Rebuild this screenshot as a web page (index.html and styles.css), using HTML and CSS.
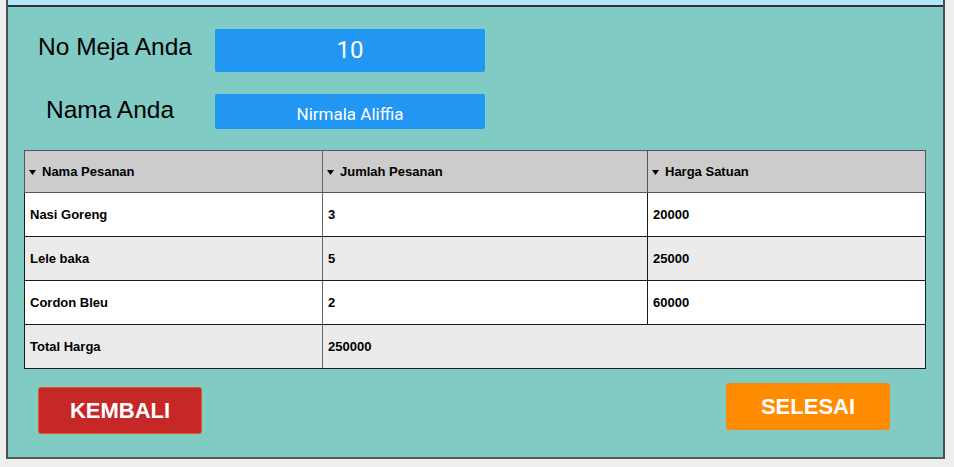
FILE: index.html
```html
<!DOCTYPE html>
<html lang="id">
<head>
<meta charset="utf-8">
<title>Pesanan</title>
<link rel="stylesheet" href="styles.css">
</head>
<body>
<div class="frame">
  <div class="frame-top"></div>
  <main class="panel">
    <div class="form-row form-row--meja">
      <label class="label label--meja">No Meja Anda</label>
      <div class="field field--meja">10</div>
    </div>
    <div class="form-row form-row--nama">
      <label class="label label--nama">Nama Anda</label>
      <div class="field field--nama">Nirmala Aliffia</div>
    </div>
    <table class="orders">
      <colgroup>
        <col class="col1"><col class="col2"><col class="col3">
      </colgroup>
      <thead>
        <tr>
          <th><svg class="caret" width="7" height="5" viewBox="0 0 7 5"><polygon points="0,0 7,0 3.5,5" fill="#000"/></svg>Nama Pesanan</th>
          <th><svg class="caret" width="7" height="5" viewBox="0 0 7 5"><polygon points="0,0 7,0 3.5,5" fill="#000"/></svg>Jumlah Pesanan</th>
          <th><svg class="caret" width="7" height="5" viewBox="0 0 7 5"><polygon points="0,0 7,0 3.5,5" fill="#000"/></svg>Harga Satuan</th>
        </tr>
      </thead>
      <tbody>
        <tr><td>Nasi Goreng</td><td>3</td><td>20000</td></tr>
        <tr class="alt"><td>Lele baka</td><td>5</td><td>25000</td></tr>
        <tr><td>Cordon Bleu</td><td>2</td><td>60000</td></tr>
        <tr class="alt"><td>Total Harga</td><td colspan="2">250000</td></tr>
      </tbody>
    </table>
    <div class="actions">
      <button class="btn btn--back">KEMBALI</button>
      <button class="btn btn--done">SELESAI</button>
    </div>
  </main>
</div>
</body>
</html>
```

FILE: styles.css
```css
html, body {
  margin: 0;
  padding: 0;
}
body {
  background: #eeeeee;
  font-family: "Liberation Sans", Arial, sans-serif;
  color: #000;
}
.frame {
  margin-left: 6px;
  width: 939px;
  box-sizing: border-box;
  border-left: 2px solid #4d4d4d;
  border-right: 2px solid #4d4d4d;
  border-bottom: 2px solid #555a58;
}
.frame-top {
  height: 5px;
  background: #b3e5fc;
  border-bottom: 2px solid #333;
}
.panel {
  background: #80cbc4;
  height: 450px;
  box-sizing: border-box;
  padding: 22px 0 0 0;
}
.form-row {
  display: flex;
  align-items: center;
}
.form-row--nama {
  margin-top: 22px;
}
.label {
  box-sizing: border-box;
  width: 207px;
  font-size: 24.5px;
  line-height: 28px;
}
.label--meja {
  padding-left: 30px;
  padding-bottom: 8px;
}
.label--nama {
  padding-left: 38px;
  padding-bottom: 3px;
}
.field {
  width: 270px;
  box-sizing: border-box;
  background: #2196f3;
  border-radius: 2px;
  color: #fff;
  font-family: Roboto, "Liberation Sans", sans-serif;
  text-align: center;
}
.field--meja {
  height: 43px;
  font-size: 24px;
  line-height: 43px;
}
.field--nama {
  height: 35px;
  font-size: 17px;
  line-height: 20px;
  padding-top: 10px;
}
.orders {
  margin: 21px 0 0 16px;
  width: 901px;
  table-layout: fixed;
  border-collapse: collapse;
  font-size: 13px;
  font-weight: bold;
}
.col1 { width: 298px; }
.col2 { width: 325px; }
.col3 { width: 278px; }
.orders th,
.orders td {
  border: 1px solid #1a1a1a;
  padding: 0 5px;
  text-align: left;
  white-space: nowrap;
}
.orders th {
  background: #cccccc;
  height: 41px;
  border-color: #555;
  padding-left: 4px;
}
.orders td {
  background: #ffffff;
  height: 43px;
}
.orders tr.alt td {
  background: #ebebeb;
}
.orders td:first-child,
.orders th:first-child {
  border-right-color: #666;
}
.caret {
  margin-right: 6px;
  vertical-align: 1px;
}
.actions {
  display: flex;
  justify-content: space-between;
  align-items: flex-start;
  padding: 0 53px 0 30px;
  margin-top: 14px;
}
.btn {
  width: 164px;
  height: 47px;
  box-sizing: border-box;
  border-radius: 3px;
  color: #fff;
  font-family: "Liberation Sans", Arial, sans-serif;
  font-weight: bold;
  font-size: 22px;
  padding: 0;
  cursor: pointer;
}
.btn--back {
  margin-top: 4px;
  background: #c62828;
  border: 1px solid #e2581c;
}
.btn--done {
  background: #ff8c00;
  border: 1px solid #f08a1a;
}
```
